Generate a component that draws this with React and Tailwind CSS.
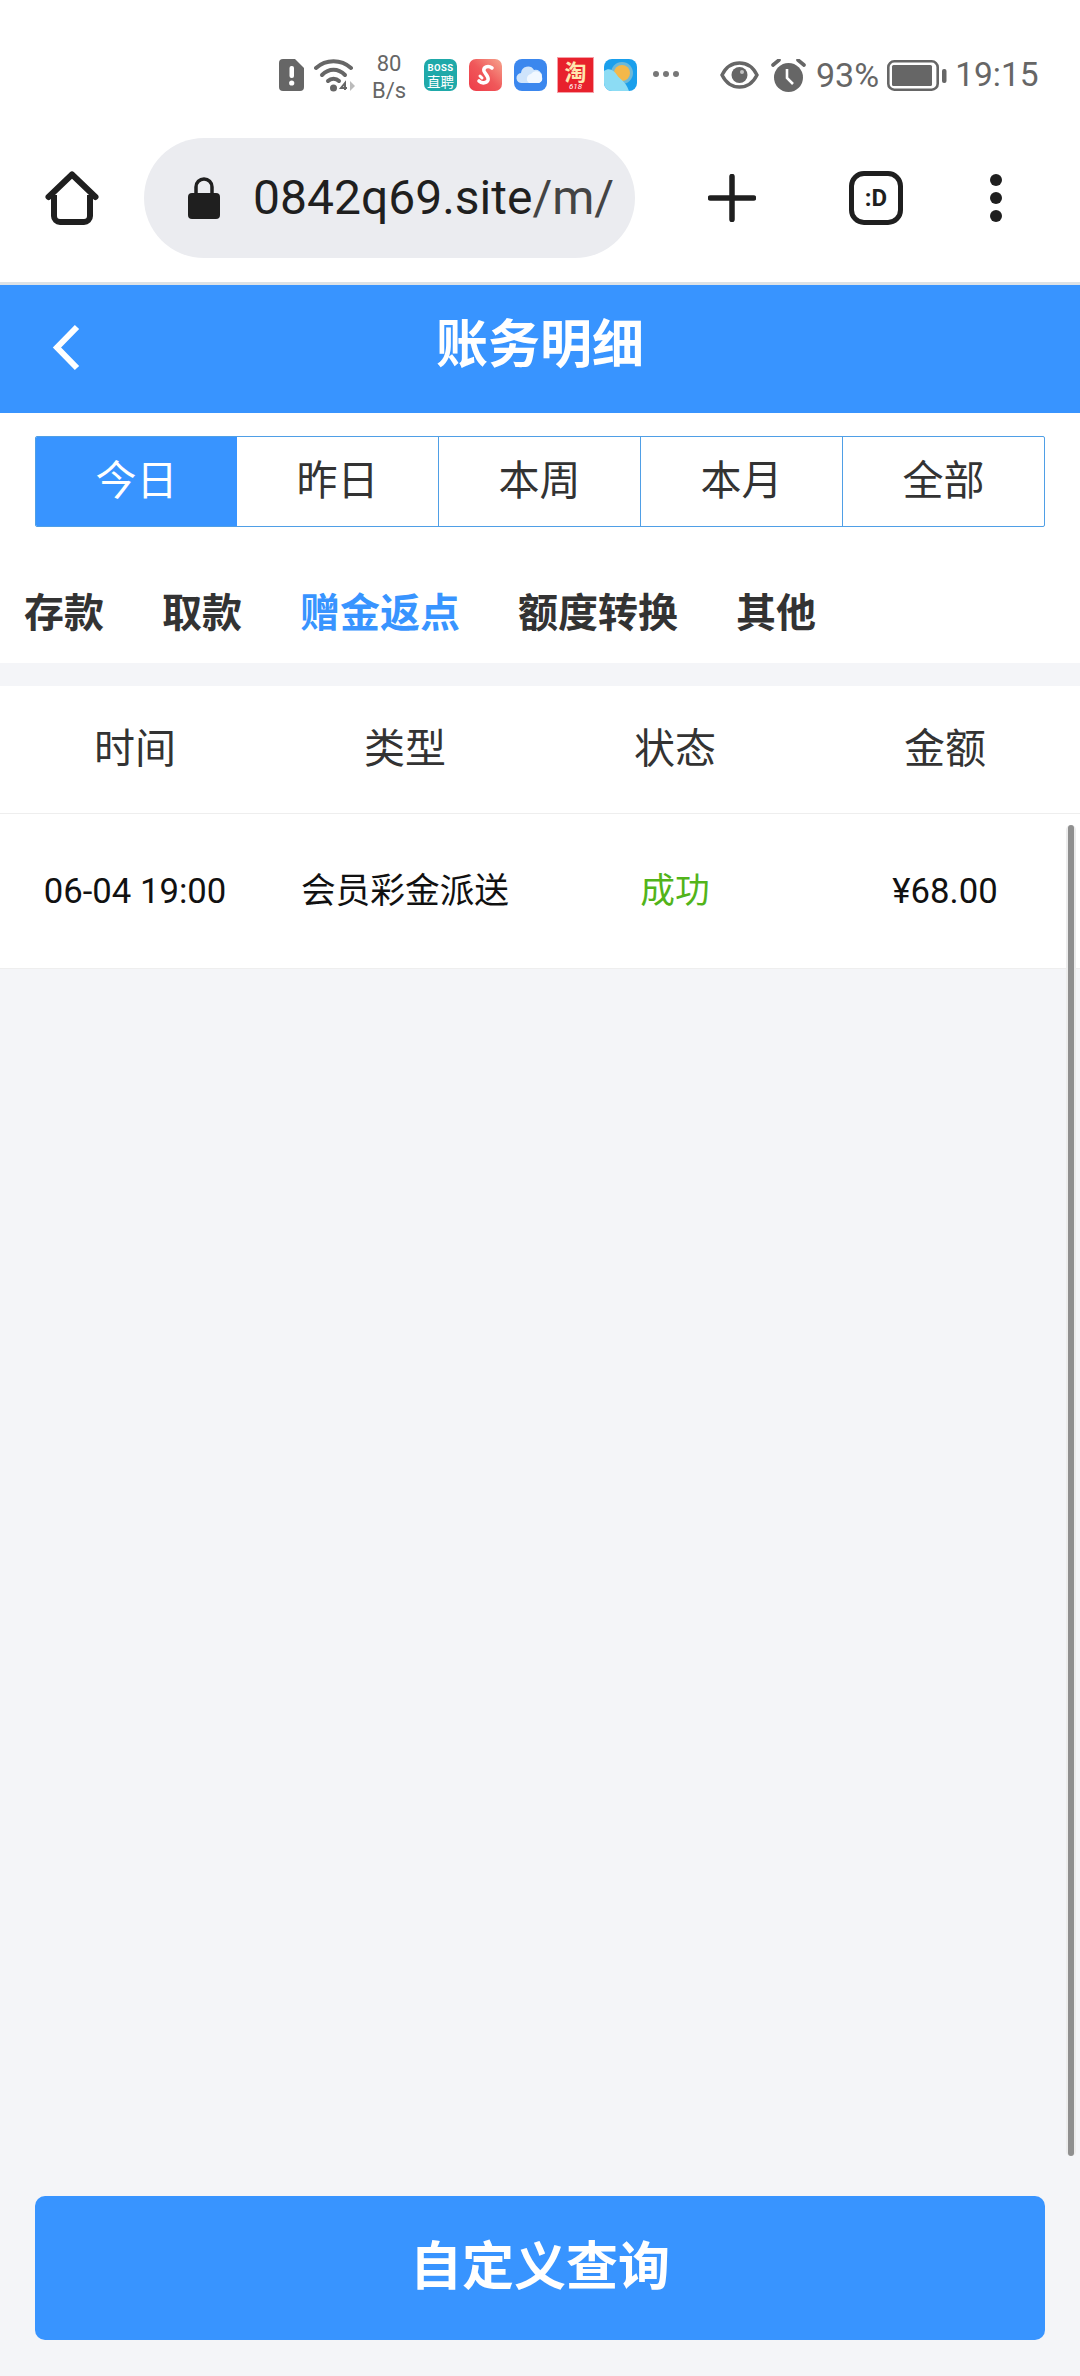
import React from "react";

const sans = "font-['Roboto','Noto_Sans_CJK_SC',sans-serif]";

function AlertIcon() {
  return (
    <svg width="25" height="32" viewBox="0 0 25 32" className="shrink-0">
      <path d="M4 0H16L25 9V28a4 4 0 0 1-4 4H4a4 4 0 0 1-4-4V4a4 4 0 0 1 4-4Z" fill="#666" />
      <rect x="10.5" y="7" width="4.5" height="12" rx="2" fill="#fff" />
      <circle cx="12.7" cy="24" r="2.6" fill="#fff" />
    </svg>
  );
}
function Wifi() {
  return (
    <svg width="42" height="34" viewBox="0 0 42 34" className="shrink-0">
      <g fill="none" stroke="#666" strokeWidth="4" strokeLinecap="round">
        <path d="M2 10C12 1 27 1 37 10" />
        <path d="M8 17C15 10 24 10 31 17" />
        <path d="M14 23C17 20 22 20 25 23" />
      </g>
      <circle cx="19.5" cy="30" r="3.5" fill="#666" />
      <path d="M31 32V25L27 30H33" fill="none" stroke="#666" strokeWidth="2" />
      <path d="M36 23L41 28L36 33Z" fill="#bbb" />
    </svg>
  );
}
function Boss() {
  return (
    <div className="w-[33px] h-[32px] rounded-[7px] bg-[#1fa9a9] flex flex-col items-center justify-center text-white leading-none shrink-0">
      <span className="text-[9.5px] font-bold leading-[12px] tracking-[0.4px] font-['Roboto',sans-serif]">BOSS</span>
      <span className="text-[13.5px] leading-[14px] font-['Noto_Sans_CJK_SC',sans-serif]">直聘</span>
    </div>
  );
}
function SApp() {
  return (
    <svg width="33" height="32" viewBox="0 0 33 32" className="shrink-0">
      <defs>
        <linearGradient id="sg" x1="1" y1="0" x2="0" y2="1">
          <stop offset="0" stopColor="#f6a58e" />
          <stop offset="0.5" stopColor="#f0585a" />
          <stop offset="1" stopColor="#ee3b48" />
        </linearGradient>
      </defs>
      <rect width="33" height="32" rx="7" fill="url(#sg)" />
      <path d="M23 9C19 6 14 8 15 12C16 15 20 17 19 21C18 24 13 25 10 22" fill="none" stroke="#fff" strokeWidth="3.6" strokeLinecap="round" />
      <path d="M11 17L13 19" stroke="#fff" strokeWidth="3" strokeLinecap="round" />
    </svg>
  );
}
function CloudApp() {
  return (
    <svg width="33" height="32" viewBox="0 0 33 32" className="shrink-0">
      <rect width="33" height="32" rx="8" fill="#3b87ee" />
      <path d="M8 24a5 5 0 0 1-1-10a7 7 0 0 1 13-3a6.5 6.5 0 0 1 8 6.5a6.5 6.5 0 0 1-3 6.5Z" fill="#cfe4fb" />
      <path d="M15 24a5 5 0 0 1 2-9a6 6 0 0 1 11 3a5 5 0 0 1-3 6Z" fill="#f2f8ff" />
    </svg>
  );
}
function TaoApp() {
  return (
    <div className="w-[37px] h-[36px] bg-[#e8212c] flex flex-col items-center text-[#ffe7b0] leading-none shrink-0 border border-[#f6a0a8]">
      <span className="text-[22px] leading-[24px] font-bold font-['Noto_Sans_CJK_SC',sans-serif]">淘</span>
      <span className="text-[8px] leading-[10px] italic text-white font-['Roboto',sans-serif]">618</span>
    </div>
  );
}
function WeatherApp() {
  return (
    <svg width="33" height="32" viewBox="0 0 33 32" className="shrink-0">
      <rect width="33" height="32" rx="8" fill="#1a9fec" />
      <circle cx="18" cy="14" r="11" fill="#6db9d8" />
      <circle cx="18" cy="14" r="8" fill="#f4b84a" />
      <path d="M0 12C5 8 10 11 13 16C16 21 21 21 25 32H8a8 8 0 0 1-8-8Z" fill="#8cdcf4" />
    </svg>
  );
}
function Eye() {
  return (
    <svg width="39" height="30" viewBox="0 0 39 30" className="shrink-0">
      <path d="M2 15C10 -1 29 -1 37 15C29 31 10 31 2 15Z" fill="none" stroke="#666" strokeWidth="3.4" />
      <circle cx="19.5" cy="15" r="8" fill="#666" />
      <circle cx="22" cy="12" r="2" fill="#fff" opacity="0.6" />
    </svg>
  );
}
function Alarm() {
  return (
    <svg width="35" height="33" viewBox="0 0 35 33" className="shrink-0">
      <circle cx="17.5" cy="18.5" r="14.5" fill="#666" />
      <path d="M2 6L8 1M33 6L27 1" stroke="#666" strokeWidth="3.6" strokeLinecap="round" />
      <path d="M16 10V19L22 25" fill="none" stroke="#fff" strokeWidth="2.6" />
    </svg>
  );
}
function Battery() {
  return (
    <svg width="60" height="31" viewBox="0 0 60 31" className="shrink-0">
      <rect x="1.3" y="1.3" width="49.4" height="28.4" rx="6" fill="none" stroke="#666" strokeWidth="2.6" />
      <rect x="5" y="5" width="40" height="21" rx="1.5" fill="#666" />
      <rect x="55" y="9" width="4.5" height="14" rx="2" fill="#666" />
    </svg>
  );
}

function StatusBar() {
  return (
    <div className={`h-[108px] flex items-start bg-white pl-[279px] pt-[45px] text-[#666] shrink-0 ${sans}`}>
      <div className="flex items-center h-[60px]">
        <AlertIcon />
        <div className="ml-[10px]"><Wifi /></div>
        <div className="ml-[14px] w-[38px] flex flex-col items-center text-[22px] leading-[27px] mt-[4px] font-['Roboto',sans-serif]">
          <span>80</span>
          <span>B/s</span>
        </div>
        <div className="ml-[16px] flex items-center">
          <Boss />
          <div className="ml-[12px]"><SApp /></div>
          <div className="ml-[12px]"><CloudApp /></div>
          <div className="ml-[10px]"><TaoApp /></div>
          <div className="ml-[10px]"><WeatherApp /></div>
        </div>
        <div className="ml-[16px] flex gap-[4px] -mt-[2px]">
          <span className="w-[6px] h-[6px] rounded-full bg-[#777]" />
          <span className="w-[6px] h-[6px] rounded-full bg-[#777]" />
          <span className="w-[6px] h-[6px] rounded-full bg-[#777]" />
        </div>
        <div className="ml-[41px]"><Eye /></div>
        <div className="ml-[12px]"><Alarm /></div>
        <span className="ml-[10px] text-[34px] leading-[34px] font-['Roboto',sans-serif]">93%</span>
        <div className="ml-[8px]"><Battery /></div>
        <span className="ml-[8px] text-[33.5px] leading-[34px] font-['Roboto',sans-serif]">19:15</span>
      </div>
    </div>
  );
}

function BrowserBar() {
  return (
    <div className="h-[177px] bg-white border-b-[3px] border-[#dde2e6] flex items-start pt-[30px] shrink-0">
      <div className="ml-[45px] mt-[33px] shrink-0">
        <svg width="54" height="54" viewBox="0 0 54 54">
          <path d="M3.5 26L27 3.5L50.5 26" fill="none" stroke="#1f1f1f" strokeWidth="6" strokeLinecap="round" strokeLinejoin="round" />
          <path d="M9 24V45a6 6 0 0 0 6 6H39a6 6 0 0 0 6-6V24" fill="none" stroke="#1f1f1f" strokeWidth="6" />
        </svg>
      </div>
      <div className="ml-[45px] w-[491px] h-[120px] rounded-full bg-[#ebecf0] flex items-center pl-[44px] shrink-0">
        <svg width="32" height="42" viewBox="0 0 32 42" className="shrink-0">
          <path d="M8 18V10a8 8 0 0 1 16 0V18" fill="none" stroke="#1f1f1f" strokeWidth="3.5" />
          <rect x="0" y="16" width="32" height="26" rx="4" fill="#1f1f1f" />
        </svg>
        <span className="ml-[33px] text-[48px] leading-none text-[#1f1f1f] font-['Roboto',sans-serif] whitespace-nowrap">
          0842q69.site<span className="text-[#444]">/m/</span>
        </span>
      </div>
      <div className="ml-[73px] mt-[36px] shrink-0">
        <svg width="48" height="48" viewBox="0 0 48 48">
          <path d="M24 2.5V45.5M2.5 24H45.5" stroke="#1f1f1f" strokeWidth="5.5" strokeLinecap="round" />
        </svg>
      </div>
      <div className="ml-[93px] mt-[33px] w-[54px] h-[54px] rounded-[15px] border-[5.5px] border-[#1f1f1f] flex items-center justify-center text-[#1f1f1f] text-[24px] font-bold leading-none shrink-0 font-['Roboto',sans-serif]">
        :D
      </div>
      <div className="ml-[87px] mt-[36px] flex flex-col gap-[6px] shrink-0">
        <span className="w-[12px] h-[12px] rounded-full bg-[#1f1f1f]" />
        <span className="w-[12px] h-[12px] rounded-full bg-[#1f1f1f]" />
        <span className="w-[12px] h-[12px] rounded-full bg-[#1f1f1f]" />
      </div>
    </div>
  );
}

const tabs = ["今日", "昨日", "本周", "本月", "全部"];
const subs = [
  { t: "存款" },
  { t: "取款" },
  { t: "赠金返点", on: true },
  { t: "额度转换" },
  { t: "其他" },
];
const heads = ["时间", "类型", "状态", "金额"];

export default function App() {
  return (
    <div className={`relative w-[1080px] h-[2376px] overflow-hidden bg-[#f4f5f8] flex flex-col ${sans}`}>
      <StatusBar />
      <BrowserBar />
      <div className="h-[128px] bg-[#3894ff] relative flex items-center justify-center shrink-0">
        <span className="text-[52px] font-bold text-white leading-none -mt-[6px]">账务明细</span>
        <svg width="30" height="47" viewBox="0 0 30 47" className="absolute left-[51px] top-[39px]">
          <path d="M26 3L6 23.5L26 44" fill="none" stroke="#fff" strokeWidth="6" />
        </svg>
      </div>
      <div className="bg-white h-[250px] shrink-0 flex flex-col">
        <div className="mx-[35px] mt-[23px] h-[91px] border border-[#4f9fe6] rounded-[2px] flex overflow-hidden">
          {tabs.map((t, i) => (
            <div
              key={t}
              className={`flex-1 flex items-center justify-center text-[41px] leading-none ${
                i === 0 ? "bg-[#3894ff] text-white" : "text-[#333]"
              } ${i > 1 ? "border-l border-[#4f9fe6]" : ""}`}
            >
              {t}
            </div>
          ))}
        </div>
        <div className="flex pl-[24px] gap-[58px] mt-[58px] text-[40px] font-bold leading-[58px] text-[#333]">
          {subs.map((s) => (
            <span key={s.t} className={s.on ? "text-[#3894ff]" : ""}>{s.t}</span>
          ))}
        </div>
      </div>
      <div className="mt-[23px] bg-white h-[128px] shrink-0 grid grid-cols-4 border-b border-[#eeeeee]">
        {heads.map((h) => (
          <div key={h} className="flex items-center justify-center text-[41px] text-[#333] leading-none">
            {h}
          </div>
        ))}
      </div>
      <div className="bg-white h-[155px] shrink-0 grid grid-cols-4 border-b border-[#eeeeee] text-[34.7px] leading-none text-[#111]">
        <div className="flex items-center justify-center whitespace-nowrap">06-04 19:00</div>
        <div className="flex items-center justify-center whitespace-nowrap">会员彩金派送</div>
        <div className="flex items-center justify-center text-[#52b41a]">成功</div>
        <div className="flex items-center justify-center">¥68.00</div>
      </div>
      <div className="flex-1" />
      <div className="mx-[35px] mb-[36px] h-[144px] rounded-[10px] bg-[#3894ff] flex items-center justify-center text-[52px] font-bold text-white leading-none shrink-0">
        自定义查询
      </div>
      <div className="absolute left-[1066px] top-[825px] w-[10px] h-[1331px] rounded-full bg-[#ececec] flex justify-center">
        <div className="w-[6px] h-full rounded-full bg-[#8f8f8f]" />
      </div>
    </div>
  );
}
